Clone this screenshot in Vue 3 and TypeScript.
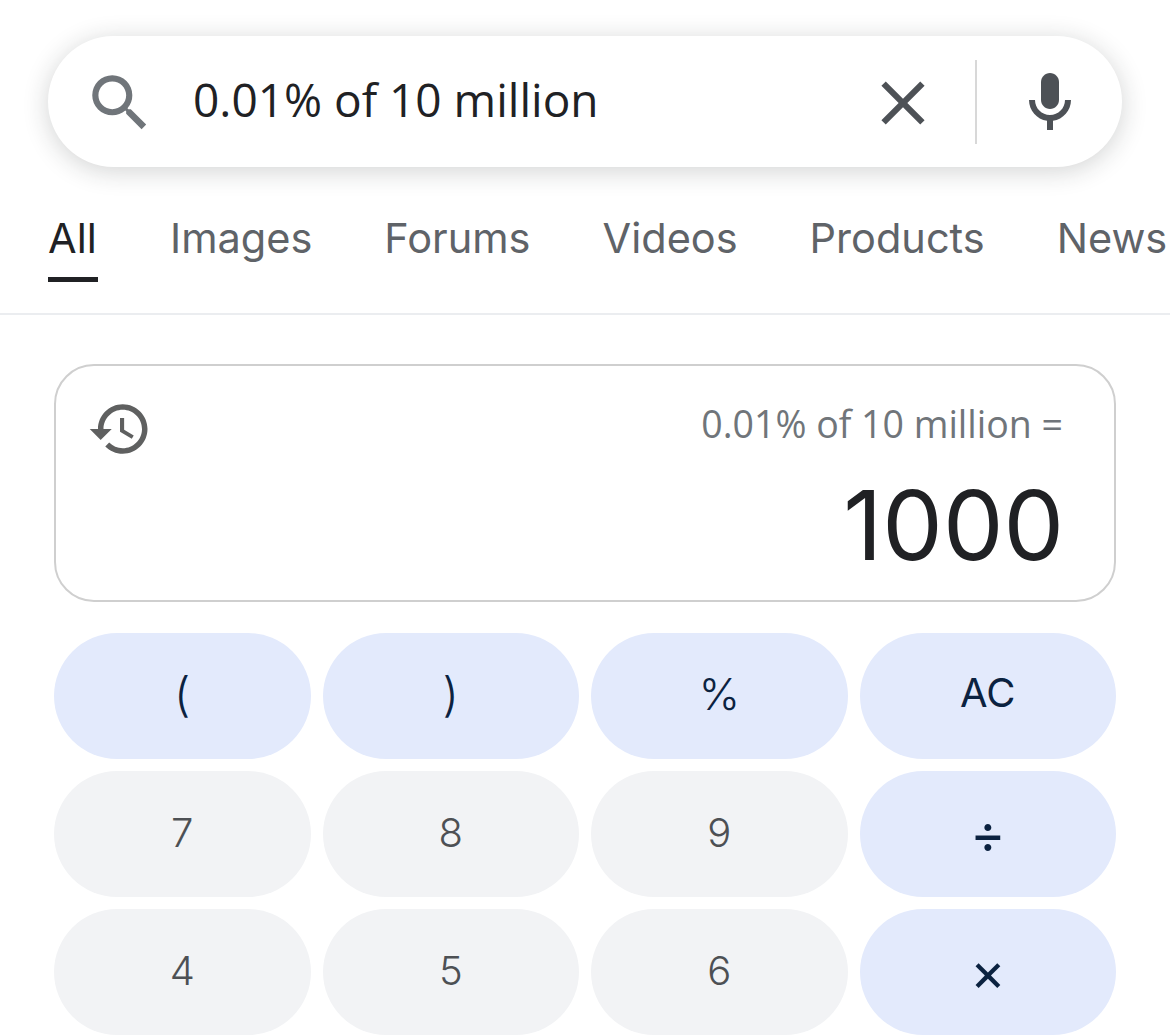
<script setup lang="ts">
interface Key { label: string; kind: 'op' | 'num'; variant?: string }
const tabs: string[] = ['All', 'Images', 'Forums', 'Videos', 'Products', 'News']
const keys: Key[] = [
  { label: '(', kind: 'op', variant: 'paren' }, { label: ')', kind: 'op', variant: 'paren' }, { label: '%', kind: 'op', variant: 'pct' }, { label: 'AC', kind: 'op', variant: 'word' },
  { label: '7', kind: 'num' }, { label: '8', kind: 'num' }, { label: '9', kind: 'num' }, { label: '÷', kind: 'op', variant: 'sym' },
  { label: '4', kind: 'num' }, { label: '5', kind: 'num' }, { label: '6', kind: 'num' }, { label: '×', kind: 'op', variant: 'sym' },
]
</script>

<template>
  <div class="page">
    <div class="search">
      <svg class="ic-search" viewBox="0 0 24 24"><path d="M15.5 14h-.79l-.28-.27A6.47 6.47 0 0 0 16 9.5 6.5 6.5 0 1 0 9.5 16c1.61 0 3.09-.59 4.23-1.57l.27.28v.79l5 4.99L20.49 19l-4.99-5zm-6 0C7.01 14 5 11.99 5 9.5S7.01 5 9.5 5 14 7.01 14 9.5 11.99 14 9.5 14z"/></svg>
      <span class="query">0.01% of 10 million</span>
      <svg class="ic-close" viewBox="0 0 24 24"><path d="M19 6.41 17.59 5 12 10.59 6.41 5 5 6.41 10.59 12 5 17.59 6.41 19 12 13.41 17.59 19 19 17.59 13.41 12z"/></svg>
      <span class="divider"></span>
      <svg class="ic-mic" viewBox="0 0 24 24"><path d="M12 14c1.66 0 3-1.34 3-3V5c0-1.66-1.34-3-3-3S9 3.34 9 5v6c0 1.66 1.34 3 3 3z"/><path d="M17 11c0 2.76-2.24 5-5 5s-5-2.24-5-5H5c0 3.53 2.61 6.43 6 6.92V21h2v-3.08c3.39-.49 6-3.39 6-6.92h-2z"/></svg>
    </div>

    <nav class="tabs">
      <span v-for="(t, i) in tabs" :key="t" class="tab" :class="{ active: i === 0 }">{{ t }}</span>
    </nav>

    <section class="calc">
      <div class="display">
        <svg class="ic-history" viewBox="0 0 24 24"><path d="M13 3c-4.97 0-9 4.03-9 9H1l3.89 3.89.07.14L9 12H6c0-3.87 3.13-7 7-7s7 3.13 7 7-3.13 7-7 7c-1.93 0-3.68-.79-4.94-2.06l-1.42 1.42C8.27 19.99 10.51 21 13 21c4.97 0 9-4.03 9-9s-4.03-9-9-9zm-1 5v5l4.28 2.54.72-1.21-3.5-2.08V8H12z"/></svg>
        <div class="readout">
          <div class="expr">0.01% of 10 million =</div>
          <div class="result">1000</div>
        </div>
      </div>
      <div class="keys">
        <div v-for="k in keys" :key="k.label" class="key" :class="[k.kind, k.variant]">{{ k.label }}</div>
      </div>
    </section>
  </div>
</template>

<style>
html, body { margin: 0; background: #fff; overflow: hidden; }
</style>

<style scoped>
.page {
  width: 1170px;
  height: 1035px;
  overflow: hidden;
  background: #fff;
  padding-top: 36px;
  box-sizing: border-box;
  font-family: "Open Sans", Roboto, sans-serif;
}
.search {
  display: flex;
  align-items: center;
  height: 131px;
  margin: 0 48px;
  border-radius: 66px;
  background: #fff;
  box-shadow: 0 4px 26px rgba(32, 33, 36, 0.2);
  padding-left: 35px;
}
.ic-search { width: 74px; height: 74px; fill: #70757a; flex: none; margin-top: 3px; }
.query {
  margin-left: 36px;
  flex: 1;
  font-size: 46px;
  color: #202124;
  margin-top: -6px;
}
.ic-close { width: 74px; height: 74px; fill: #4d5156; flex: none; margin-top: 2px; }
.divider { width: 2px; height: 84px; background: #d8d8d8; margin: 0 37px 0 35px; flex: none; }
.ic-mic { width: 72px; height: 72px; fill: #4d5156; flex: none; margin-right: 36px; margin-top: 3px; }

.tabs {
  display: flex;
  gap: 72px;
  height: 146px;
  padding-left: 48px;
  border-bottom: 2px solid #ebedf0;
  white-space: nowrap;
}
.tab {
  font-family: Inter, sans-serif;
  font-size: 41.5px;
  min-width: 50px;
  color: #5f6368;
  padding-top: 47px;
  line-height: 48px;
  height: 68px;
}
.tab.active {
  color: #202124;
  height: 63px;
  border-bottom: 5px solid #202124;
}

.calc { padding: 49px 54px 0; }
.display {
  display: flex;
  justify-content: space-between;
  height: 238px;
  box-sizing: border-box;
  border: 2px solid #cfcfcf;
  border-radius: 40px;
  padding: 30px 51px 0 31px;
}
.ic-history { width: 66px; height: 66px; fill: #5f6060; flex: none; }
.readout { text-align: right; }
.expr { font-size: 37.5px; line-height: 56px; color: #70757a; }
.result {
  font-family: Inter, sans-serif;
  font-size: 96px;
  line-height: 110px;
  color: #202124;
  margin-top: 18px;
  margin-right: -1px;
}
.keys {
  display: grid;
  grid-template-columns: repeat(4, 1fr);
  grid-auto-rows: 126px;
  column-gap: 12px;
  row-gap: 12px;
  margin-top: 31px;
  width: 1062px;
}
.key {
  display: flex;
  align-items: center;
  justify-content: center;
  border-radius: 63px;
  font-family: Inter, sans-serif;
  font-size: 40px;
  font-weight: 300;
  padding-bottom: 4px;
  box-sizing: border-box;
}
.op { background: #e3eafc; color: #0b2240; }
.num { background: #f2f3f5; color: #4d5054; }
.paren { font-size: 47px; padding-bottom: 6px; }
.pct { font-size: 44px; padding-bottom: 4px; }
.word { font-weight: 400; padding-bottom: 7px; }
.sym { font-weight: 400; padding-bottom: 1px; font-size: 54px; }
</style>
